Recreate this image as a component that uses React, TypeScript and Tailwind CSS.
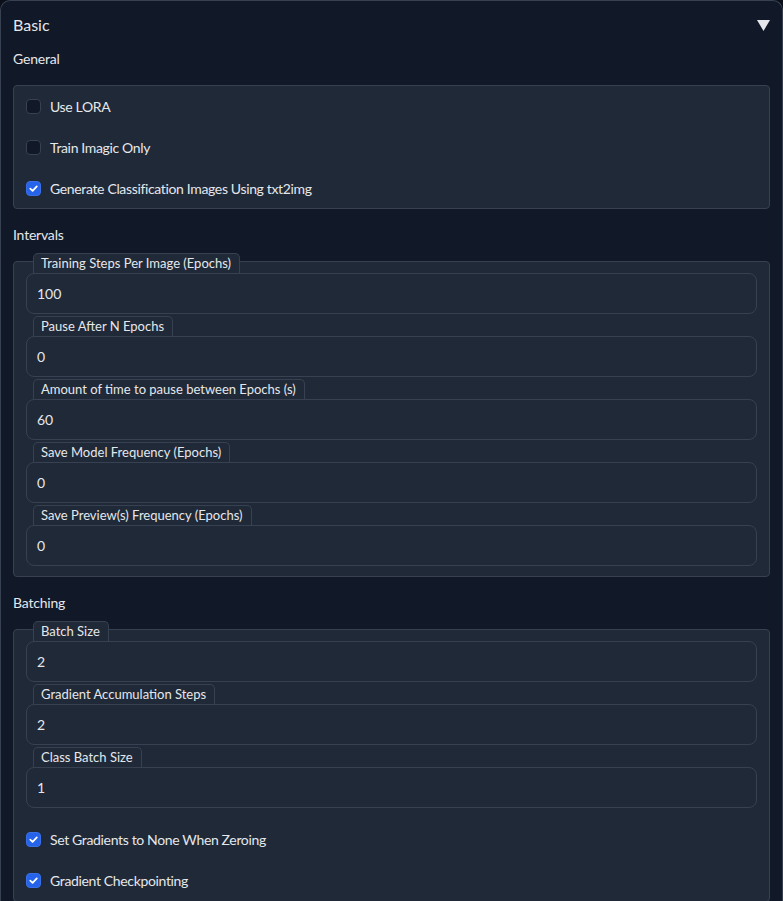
import React from 'react';

const font = { fontFamily: 'Lato, "Noto Sans", sans-serif' };

function Check({ checked, label, last }: { checked?: boolean; label: string; last?: boolean }) {
  return (
    <div className={`flex items-center ${last ? 'h-[40px]' : 'h-[41px]'} px-3`}>
      {checked ? (
        <span className="w-[15px] h-[15px] rounded-[4px] bg-[#2563eb] border border-[#3b6fe6] flex items-center justify-center">
          <svg width="11" height="11" viewBox="0 0 12 12" fill="none">
            <path d="M2.5 6.2L5 8.6L9.6 3.6" stroke="white" strokeWidth="1.9" strokeLinecap="round" strokeLinejoin="round" />
          </svg>
        </span>
      ) : (
        <span className="w-[15px] h-[15px] rounded-[4px] bg-[#111827] border border-[#374151]" />
      )}
      <span className="ml-[9px] text-[14px] tracking-[-0.35px] text-[#e5e7eb]">{label}</span>
    </div>
  );
}

function Field({ label, value }: { label: string; value: string }) {
  return (
    <div className="flex flex-col">
      <div className="ml-[7px] self-start h-[20px] pl-[7px] pr-[8px] rounded-t-[5px] border border-b-0 border-[#374151] bg-[#1f2937] text-[13px] leading-[19px] text-[#e5e7eb]">
        {label}
      </div>
      <div className="h-[41px] rounded-[8px] border border-[#374151] bg-[#1f2937] flex items-center px-[10px] text-[14px] text-[#e5e7eb]">
        {value}
      </div>
    </div>
  );
}

function Heading({ children, first }: { children: React.ReactNode; first?: boolean }) {
  return (
    <div className={`${first ? 'mt-3' : 'mt-4'} mb-4 h-5 leading-5 text-[14px] tracking-[-0.2px] text-[#e5e7eb]`}>
      {children}
    </div>
  );
}

export default function App() {
  return (
    <div className="min-h-screen bg-[#0b0f19]" style={font}>
      <div className="w-[783px] rounded-t-[10px] border border-[#374151] border-b-0 bg-[#111827] px-3 pt-3 pb-6">
        <div className="flex items-center justify-between h-6">
          <span className="text-[16px] text-[#e5e7eb]">Basic</span>
          <svg width="13" height="11" viewBox="0 0 13 11">
            <polygon points="0,0 13,0 6.5,11" fill="#e5e7eb" />
          </svg>
        </div>

        <Heading first>General</Heading>
        <div className="rounded-[4px] border border-[#374151] bg-[#1f2937]">
          <Check label="Use LORA" />
          <Check label="Train Imagic Only" />
          <Check checked last label="Generate Classification Images Using txt2img" />
        </div>

        <Heading>Intervals</Heading>
        <div className="rounded-[4px] border border-[#374151] bg-[#1f2937] px-3 pb-[10px]">
          <div className="-mt-[9px] flex flex-col gap-[2px]">
            <Field label="Training Steps Per Image (Epochs)" value="100" />
            <Field label="Pause After N Epochs" value="0" />
            <Field label="Amount of time to pause between Epochs (s)" value="60" />
            <Field label="Save Model Frequency (Epochs)" value="0" />
            <Field label="Save Preview(s) Frequency (Epochs)" value="0" />
          </div>
        </div>

        <Heading>Batching</Heading>
        <div className="rounded-[4px] border border-[#374151] bg-[#1f2937]">
          <div className="px-3 -mt-[9px] flex flex-col gap-[2px]">
            <Field label="Batch Size" value="2" />
            <Field label="Gradient Accumulation Steps" value="2" />
            <Field label="Class Batch Size" value="1" />
          </div>
          <div className="mt-[11px]">
            <Check checked label="Set Gradients to None When Zeroing" />
            <Check checked label="Gradient Checkpointing" />
          </div>
        </div>
      </div>
    </div>
  );
}
